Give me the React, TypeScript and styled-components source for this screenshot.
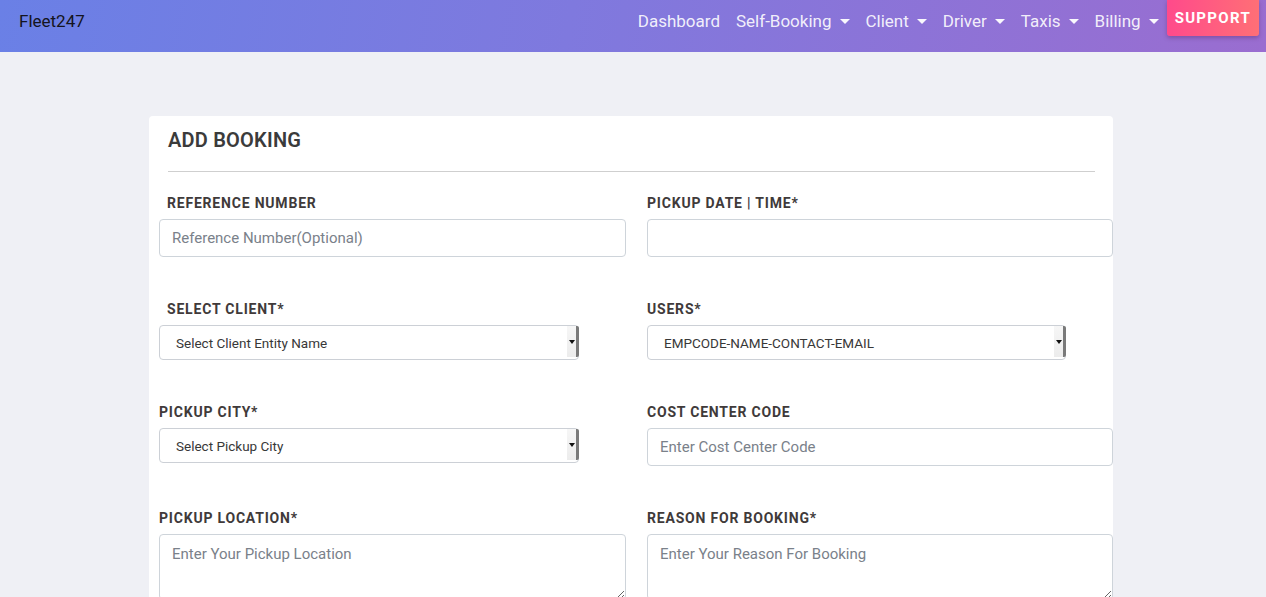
import React from "react";
import styled, { createGlobalStyle } from "styled-components";

const GlobalStyle = createGlobalStyle`
  * { box-sizing: border-box; }
  body {
    margin: 0;
    background: #eff0f5;
    font-family: Roboto, "Noto Sans", Arial, sans-serif;
    color: #333;
  }
`;

const Navbar = styled.nav`
  height: 52px;
  display: flex;
  align-items: center;
  justify-content: space-between;
  padding: 0 7px 10px 19px;
  background: linear-gradient(100deg, #6a80e6 0%, #7f79de 45%, #9a6dd0 100%);
`;

const Brand = styled.a`
  font-size: 17px;
  color: #141420;
  text-decoration: none;
`;

const NavList = styled.ul`
  list-style: none;
  margin: 0;
  padding: 0;
  display: flex;
  align-items: center;
  align-self: stretch;
`;

const NavItem = styled.li`
  display: flex;
  align-items: center;
`;

const NavLink = styled.a`
  display: flex;
  align-items: center;
  padding: 0 8px;
  font-size: 17px;
  color: rgba(255, 255, 255, 0.9);
  text-decoration: none;
`;

const Caret = styled.span`
  display: inline-block;
  margin-left: 8px;
  width: 0;
  height: 0;
  border-top: 5px solid rgba(255, 255, 255, 0.95);
  border-left: 5.5px solid transparent;
  border-right: 5.5px solid transparent;
`;

const SupportButton = styled.button`
  align-self: flex-start;
  height: 36px;
  padding: 0 8px;
  border: none;
  border-radius: 0 0 3px 3px;
  background: linear-gradient(90deg, #ff4a8b 0%, #ff6f76 100%);
  box-shadow: 0 2px 4px rgba(80, 30, 80, 0.35);
  color: #fff;
  font-family: inherit;
  font-weight: 700;
  font-size: 15px;
  letter-spacing: 1.3px;
  cursor: pointer;
`;

const Main = styled.main`
  padding-top: 64px;
`;

const Card = styled.section`
  width: 964px;
  margin-left: 149px;
  background: #fff;
  border-radius: 4px;
  padding-top: 11px;
`;

const CardHeader = styled.header`
  padding: 0 18px 0 19px;
`;

const Title = styled.h2`
  margin: 0;
  font-size: 20px;
  line-height: 26px;
  font-weight: 600;
  color: #3b3b3b;
  letter-spacing: 0.2px;
`;

const Divider = styled.hr`
  margin: 18px 0 0;
  border: 0;
  border-top: 1px solid #cfcfcf;
`;

const FormGrid = styled.form`
  display: grid;
  grid-template-columns: 467px 466px;
  column-gap: 21px;
  row-gap: 41px;
  padding: 20px 0 0 10px;
`;

const Field = styled.div`
  display: flex;
  flex-direction: column;
  align-items: flex-start;
`;

const Label = styled.label<{ $indent?: boolean }>`
  display: block;
  margin: 0 0 5px ${(p) => (p.$indent ? "8px" : "0")};
  font-size: 14px;
  line-height: 22px;
  font-weight: 700;
  letter-spacing: 0.8px;
  text-transform: uppercase;
  color: #403a3a;
`;

const TextInput = styled.input`
  width: 100%;
  height: 38px;
  padding: 6px 12px;
  border: 1px solid #ced4da;
  border-radius: 4px;
  font-family: inherit;
  font-size: 15px;
  color: #495057;
  background: #fff;
  &::placeholder { color: #7a818a; }
`;

const TextArea = styled.textarea`
  width: 100%;
  height: 66px;
  padding: 7px 12px 6px;
  border: 1px solid #ced4da;
  border-radius: 4px;
  font-family: inherit;
  font-size: 15px;
  line-height: 24px;
  color: #495057;
  resize: vertical;
  &::placeholder { color: #7a818a; }
`;

const SelectWrap = styled.div`
  position: relative;
  width: 90%;
`;

const Select = styled.select`
  width: 100%;
  height: 35px;
  padding: 0 16px;
  border: 1px solid #ccd0d6;
  border-radius: 4px;
  background: #fff;
  appearance: none;
  -webkit-appearance: none;
  font-family: inherit;
  font-size: 13.5px;
  color: #383838;
`;

const SelectButton = styled.span`
  position: absolute;
  top: 1px;
  bottom: 3px;
  right: 0;
  width: 12px;
  background: linear-gradient(180deg, #f6f6f6 0%, #ececec 100%);
  border-right: 3px solid #7a7a7a;
  border-radius: 0 2px 2px 0;
  display: flex;
  align-items: center;
  justify-content: center;
  pointer-events: none;
  &::after {
    content: "";
    width: 0;
    height: 0;
    border-top: 4px solid #111;
    border-left: 3px solid transparent;
    border-right: 3px solid transparent;
  }
`;

const navItems: { label: string; dropdown: boolean }[] = [
  { label: "Dashboard", dropdown: false },
  { label: "Self-Booking", dropdown: true },
  { label: "Client", dropdown: true },
  { label: "Driver", dropdown: true },
  { label: "Taxis", dropdown: true },
  { label: "Billing", dropdown: true },
];

const SelectBox: React.FC<{ text: string }> = ({ text }) => (
  <SelectWrap>
    <Select defaultValue="">
      <option value="">{text}</option>
    </Select>
    <SelectButton />
  </SelectWrap>
);

export default function App() {
  return (
    <>
      <GlobalStyle />
      <Navbar>
        <Brand href="#">Fleet247</Brand>
        <NavList>
          {navItems.map((n) => (
            <NavItem key={n.label}>
              <NavLink href="#">
                {n.label}
                {n.dropdown && <Caret />}
              </NavLink>
            </NavItem>
          ))}
          <SupportButton>SUPPORT</SupportButton>
        </NavList>
      </Navbar>
      <Main>
        <Card>
          <CardHeader>
            <Title>ADD BOOKING</Title>
            <Divider />
          </CardHeader>
          <FormGrid>
            <Field>
              <Label $indent>Reference Number</Label>
              <TextInput placeholder="Reference Number(Optional)" />
            </Field>
            <Field>
              <Label>Pickup Date | Time*</Label>
              <TextInput />
            </Field>
            <Field>
              <Label $indent>Select Client*</Label>
              <SelectBox text="Select Client Entity Name" />
            </Field>
            <Field>
              <Label>Users*</Label>
              <SelectBox text="EMPCODE-NAME-CONTACT-EMAIL" />
            </Field>
            <Field>
              <Label>Pickup City*</Label>
              <SelectBox text="Select Pickup City" />
            </Field>
            <Field>
              <Label>Cost Center Code</Label>
              <TextInput placeholder="Enter Cost Center Code" />
            </Field>
            <Field>
              <Label>Pickup Location*</Label>
              <TextArea placeholder="Enter Your Pickup Location" />
            </Field>
            <Field>
              <Label>Reason For Booking*</Label>
              <TextArea placeholder="Enter Your Reason For Booking" />
            </Field>
          </FormGrid>
        </Card>
      </Main>
    </>
  );
}
